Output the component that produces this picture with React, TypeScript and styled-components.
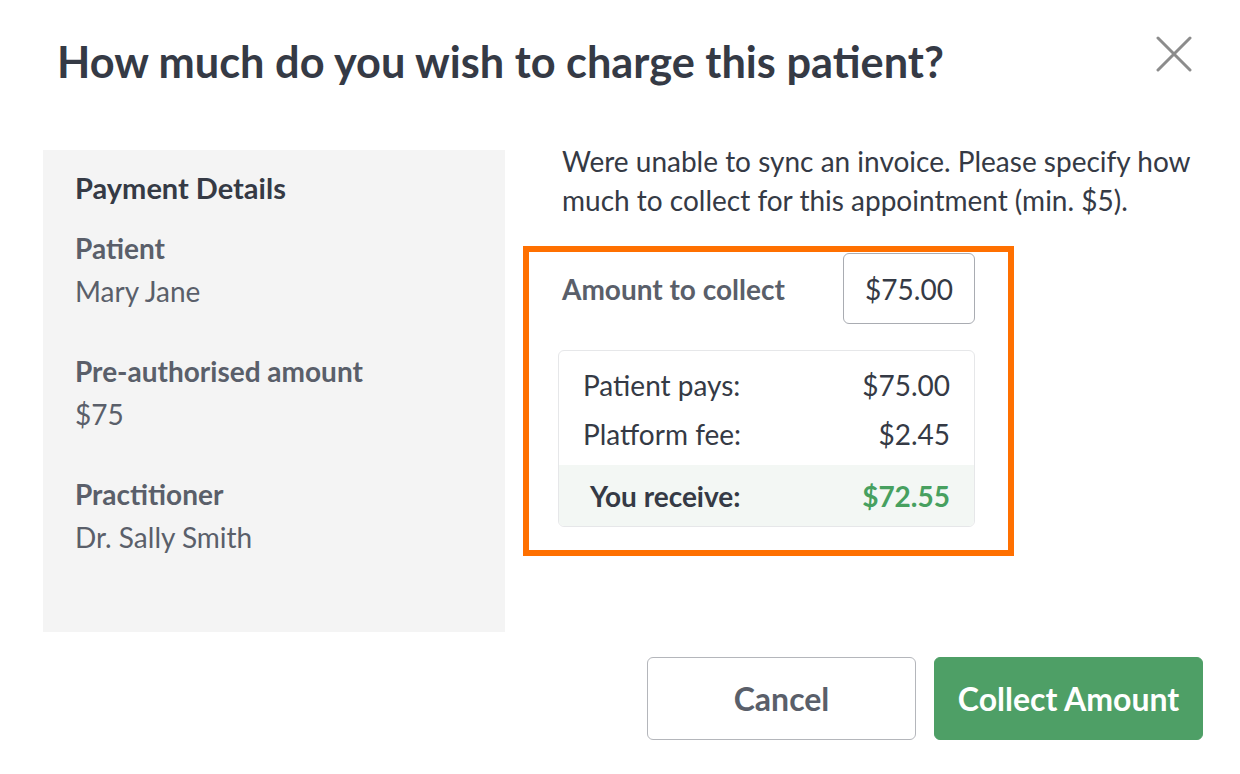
import React from 'react';
import styled, { createGlobalStyle } from 'styled-components';

const GlobalStyle = createGlobalStyle`
  html, body {
    margin: 0;
    padding: 0;
    background: #ffffff;
  }
  body {
    font-family: Lato, "Open Sans", Arial, sans-serif;
    color: #353a45;
  }
  * {
    box-sizing: border-box;
  }
`;

const summary = [
  { label: 'Patient pays:', value: '$75.00' },
  { label: 'Platform fee:', value: '$2.45' },
];

const details = [
  { label: 'Patient', value: 'Mary Jane' },
  { label: 'Pre-authorised amount', value: '$75' },
  { label: 'Practitioner', value: 'Dr. Sally Smith' },
];

export default function App() {
  return (
    <>
      <GlobalStyle />
      <Modal>
        <Header>
          <Title>How much do you wish to charge this patient?</Title>
          <CloseButton aria-label="Close">
            <svg width="36" height="36" viewBox="0 0 36 36">
              <path d="M2 2 L34 34 M34 2 L2 34" stroke="#8c8c8c" strokeWidth="3" strokeLinecap="round" />
            </svg>
          </CloseButton>
        </Header>

        <Body>
          <DetailsPanel>
            <PanelTitle>Payment Details</PanelTitle>
            {details.map((d) => (
              <DetailGroup key={d.label}>
                <DetailLabel>{d.label}</DetailLabel>
                <DetailValue>{d.value}</DetailValue>
              </DetailGroup>
            ))}
          </DetailsPanel>

          <RightColumn>
            <Description>
              Were unable to sync an invoice. Please specify how much to collect for this appointment (min. $5).
            </Description>
            <Highlight>
              <AmountRow>
                <AmountLabel>Amount to collect</AmountLabel>
                <AmountInput defaultValue="$75.00" />
              </AmountRow>
              <SummaryBox>
                <SummaryList>
                  {summary.map((s) => (
                    <SummaryRow key={s.label}>
                      <span>{s.label}</span>
                      <span>{s.value}</span>
                    </SummaryRow>
                  ))}
                </SummaryList>
                <TotalRow>
                  <span>You receive:</span>
                  <TotalValue>$72.55</TotalValue>
                </TotalRow>
              </SummaryBox>
            </Highlight>
          </RightColumn>
        </Body>

        <Footer>
          <Button>Cancel</Button>
          <Button $primary>Collect Amount</Button>
        </Footer>
      </Modal>
    </>
  );
}

const Modal = styled.div`
  width: 1240px;
  height: 774px;
  padding: 0 37px 0 43px;
  display: flex;
  flex-direction: column;
`;

const Header = styled.div`
  display: flex;
  align-items: center;
  justify-content: space-between;
  height: 124px;
  padding: 0 0 2px 14px;
`;

const Title = styled.h1`
  margin: 0;
  font-size: 43.3px;
  font-weight: 700;
  color: #353a45;
  letter-spacing: 0;
`;

const CloseButton = styled.button`
  border: none;
  background: none;
  padding: 0;
  margin: 0 11px 14px 0;
  width: 36px;
  height: 36px;
  display: flex;
  cursor: pointer;
`;

const Body = styled.div`
  display: flex;
  gap: 18px;
  margin-top: 26px;
`;

const DetailsPanel = styled.div`
  flex-shrink: 0;
  width: 462px;
  height: 482px;
  background: #f4f4f4;
  padding: 20px 32px;
`;

const PanelTitle = styled.div`
  font-size: 29px;
  font-weight: 700;
  color: #353a45;
  line-height: 36px;
  margin-bottom: 20px;
`;

const DetailGroup = styled.div`
  margin-bottom: 37px;
`;

const DetailLabel = styled.div`
  font-size: 28px;
  font-weight: 700;
  color: #5a5f6a;
  line-height: 44px;
`;

const DetailValue = styled.div`
  font-size: 28px;
  color: #5a5f6a;
  line-height: 42px;
`;

const RightColumn = styled.div`
  flex: 1;
  min-width: 0;
  display: flex;
  flex-direction: column;
  margin-top: -8px;
`;

const Description = styled.p`
  margin: 0 0 26px 39px;
  font-size: 28px;
  line-height: 39px;
  color: #353a45;
`;

const Highlight = styled.div`
  width: 491px;
  border: 6px solid #ff7000;
  padding: 1px 33px 23px 29px;
`;

const AmountRow = styled.div`
  display: flex;
  align-items: center;
  justify-content: space-between;
  padding-left: 4px;
`;

const AmountLabel = styled.span`
  font-size: 28px;
  font-weight: 700;
  color: #5a5f6a;
`;

const AmountInput = styled.input`
  width: 132px;
  height: 71px;
  border: 1.5px solid #a9acb2;
  border-radius: 6px;
  font-family: inherit;
  font-size: 28px;
  color: #353a45;
  text-align: center;
  outline: none;
  background: #fff;
`;

const SummaryBox = styled.div`
  margin-top: 26px;
  border: 1.5px solid #e6e7e9;
  border-radius: 6px;
  overflow: hidden;
`;

const SummaryList = styled.div`
  padding: 10px 24px 6px 24px;
`;

const SummaryRow = styled.div`
  display: flex;
  justify-content: space-between;
  font-size: 28px;
  line-height: 49px;
  color: #353a45;
`;

const TotalRow = styled.div`
  display: flex;
  justify-content: space-between;
  align-items: center;
  height: 61px;
  padding: 0 24px 0 31px;
  background: #f3f7f4;
  font-size: 28px;
  font-weight: 700;
  color: #353a45;
`;

const TotalValue = styled.span`
  color: #47a05f;
`;

const Footer = styled.div`
  display: flex;
  justify-content: flex-end;
  gap: 18px;
  margin-top: 25px;
`;

const Button = styled.button<{ $primary?: boolean }>`
  width: 269px;
  height: 83px;
  border-radius: 6px;
  font-family: inherit;
  font-size: 32px;
  font-weight: 700;
  cursor: pointer;
  border: 1.5px solid ${(p) => (p.$primary ? '#4e9f66' : '#b4b6bb')};
  background: ${(p) => (p.$primary ? '#4e9f66' : '#ffffff')};
  color: ${(p) => (p.$primary ? '#ffffff' : '#5a5f6a')};
`;
